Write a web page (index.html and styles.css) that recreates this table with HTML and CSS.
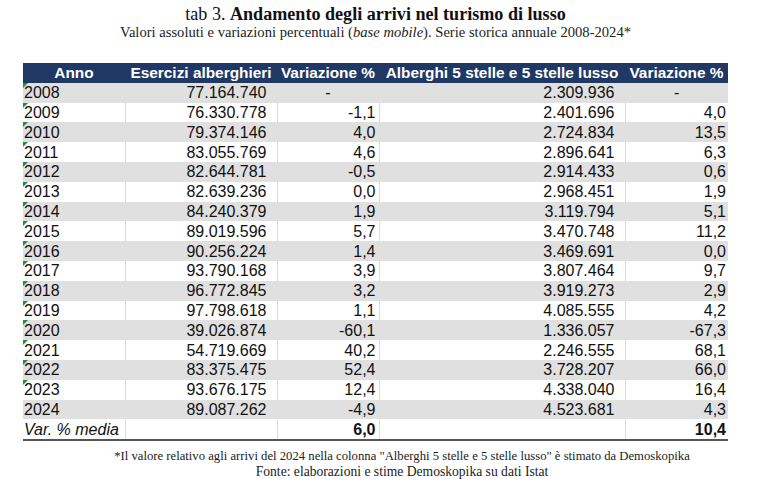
FILE: index.html
```html
<!DOCTYPE html>
<html lang="it">
<head>
<meta charset="utf-8">
<title>tab 3</title>
<link rel="stylesheet" href="styles.css">
</head>
<body>
<div class="page">
  <header class="heading">
    <h1 class="title">tab 3. <b>Andamento degli arrivi nel turismo di lusso</b></h1>
    <p class="subtitle">Valori assoluti e variazioni percentuali (<i>base mobile</i>). Serie storica annuale 2008-2024*</p>
  </header>
  <table class="data">
    <colgroup>
      <col class="c-anno"><col class="c-ese"><col class="c-var"><col class="c-alb"><col class="c-var2">
    </colgroup>
    <thead>
      <tr><th>Anno</th><th>Esercizi alberghieri</th><th>Variazione %</th><th>Alberghi 5 stelle e 5 stelle lusso</th><th>Variazione %</th></tr>
    </thead>
    <tbody>
      <tr class="g"><td class="y t">2008</td><td class="n">77.164.740</td><td class="v ctr">-</td><td class="n">2.309.936</td><td class="v2 ctr">-</td></tr>
      <tr><td class="y t">2009</td><td class="n">76.330.778</td><td class="v">-1,1</td><td class="n">2.401.696</td><td class="v2">4,0</td></tr>
      <tr class="g"><td class="y t">2010</td><td class="n">79.374.146</td><td class="v">4,0</td><td class="n">2.724.834</td><td class="v2">13,5</td></tr>
      <tr><td class="y t">2011</td><td class="n">83.055.769</td><td class="v">4,6</td><td class="n">2.896.641</td><td class="v2">6,3</td></tr>
      <tr class="g"><td class="y t">2012</td><td class="n">82.644.781</td><td class="v">-0,5</td><td class="n">2.914.433</td><td class="v2">0,6</td></tr>
      <tr><td class="y t">2013</td><td class="n">82.639.236</td><td class="v">0,0</td><td class="n">2.968.451</td><td class="v2">1,9</td></tr>
      <tr class="g"><td class="y t">2014</td><td class="n">84.240.379</td><td class="v">1,9</td><td class="n">3.119.794</td><td class="v2">5,1</td></tr>
      <tr><td class="y t">2015</td><td class="n">89.019.596</td><td class="v">5,7</td><td class="n">3.470.748</td><td class="v2">11,2</td></tr>
      <tr class="g"><td class="y t">2016</td><td class="n">90.256.224</td><td class="v">1,4</td><td class="n">3.469.691</td><td class="v2">0,0</td></tr>
      <tr><td class="y t">2017</td><td class="n">93.790.168</td><td class="v">3,9</td><td class="n">3.807.464</td><td class="v2">9,7</td></tr>
      <tr class="g"><td class="y t">2018</td><td class="n">96.772.845</td><td class="v">3,2</td><td class="n">3.919.273</td><td class="v2">2,9</td></tr>
      <tr><td class="y t">2019</td><td class="n">97.798.618</td><td class="v">1,1</td><td class="n">4.085.555</td><td class="v2">4,2</td></tr>
      <tr class="g"><td class="y t">2020</td><td class="n">39.026.874</td><td class="v">-60,1</td><td class="n">1.336.057</td><td class="v2">-67,3</td></tr>
      <tr><td class="y t">2021</td><td class="n">54.719.669</td><td class="v">40,2</td><td class="n">2.246.555</td><td class="v2">68,1</td></tr>
      <tr class="g"><td class="y t">2022</td><td class="n">83.375.475</td><td class="v">52,4</td><td class="n">3.728.207</td><td class="v2">66,0</td></tr>
      <tr><td class="y t">2023</td><td class="n">93.676.175</td><td class="v">12,4</td><td class="n">4.338.040</td><td class="v2">16,4</td></tr>
      <tr class="g"><td class="y">2024</td><td class="n">89.087.262</td><td class="v">-4,9</td><td class="n">4.523.681</td><td class="v2">4,3</td></tr>
      <tr class="last"><td class="y it">Var. % media</td><td class="n"></td><td class="v b">6,0</td><td class="n"></td><td class="v2 b">10,4</td></tr>
    </tbody>
  </table>
  <footer class="notes">
    <p class="note">*Il valore relativo agli arrivi del 2024 nella colonna "Alberghi 5 stelle e 5 stelle lusso" è stimato da Demoskopika</p>
    <p class="source">Fonte: elaborazioni e stime Demoskopika su dati Istat</p>
  </footer>
</div>
</body>
</html>
```
FILE: styles.css
```css
html, body {
  margin: 0;
  padding: 0;
  background: #ffffff;
}

.page {
  width: 705px;
  height: 484px;
  padding-left: 23px;
  overflow: hidden;
  display: flex;
  flex-direction: column;
  color: #1a1a1a;
}

.heading {
  text-align: center;
  padding-top: 4px;
  font-family: "Liberation Serif", "Times New Roman", serif;
}

.title {
  margin: 0;
  font-size: 18.1px;
  font-weight: normal;
  line-height: 20px;
  color: #111;
}

.title b {
  font-weight: bold;
}

.subtitle {
  margin: 0;
  font-size: 14.6px;
  line-height: 17px;
  color: #222;
}

.data {
  margin-top: 22px;
  width: 705px;
  border-collapse: collapse;
  table-layout: fixed;
  font-family: "Liberation Sans", Arial, sans-serif;
  font-size: 16px;
  color: #111;
}

.c-anno { width: 102px; }
.c-ese { width: 152px; }
.c-var { width: 102px; }
.c-alb { width: 246px; }
.c-var2 { width: 103px; }

.data th {
  background: #1f3864;
  color: #ffffff;
  font-weight: bold;
  font-size: 15.4px;
  height: 19.8px;
  padding: 0;
  line-height: 19px;
  text-align: center;
  white-space: nowrap;
}

.data td {
  height: 19.8px;
  padding: 0;
  line-height: 19px;
  white-space: nowrap;
  border-left: 1px solid #dcdcdc;
}

.data td:first-child {
  border-left: none;
}

.data tr.g td {
  background: #e0e0e0;
  border-left-color: #e0e0e0;
}

.data td.y {
  position: relative;
  padding-left: 1px;
  text-align: left;
}

.data td.t::before {
  content: "";
  position: absolute;
  left: 0;
  top: 0;
  border-top: 5px solid #1f8f3c;
  border-right: 5px solid transparent;
}

.data td.n {
  text-align: right;
  padding-right: 10px;
}

.data td.v,
.data td.v2 {
  text-align: right;
  padding-right: 3px;
}

.data td.v2 {
  padding-right: 2px;
}

.data td.ctr {
  text-align: center;
  padding-right: 0;
}

.data td.it {
  font-style: italic;
}

.data td.b {
  font-weight: bold;
}

.data tr.last td {
  border-bottom: 2px solid #555555;
}

.notes {
  margin-top: 8px;
  padding-left: 53px;
  text-align: center;
  font-family: "Liberation Serif", "Times New Roman", serif;
}

.note {
  margin: 0;
  font-size: 12.7px;
  line-height: 15px;
  color: #222;
}

.source {
  margin: 0;
  font-size: 13.6px;
  line-height: 16px;
  color: #222;
}
```
